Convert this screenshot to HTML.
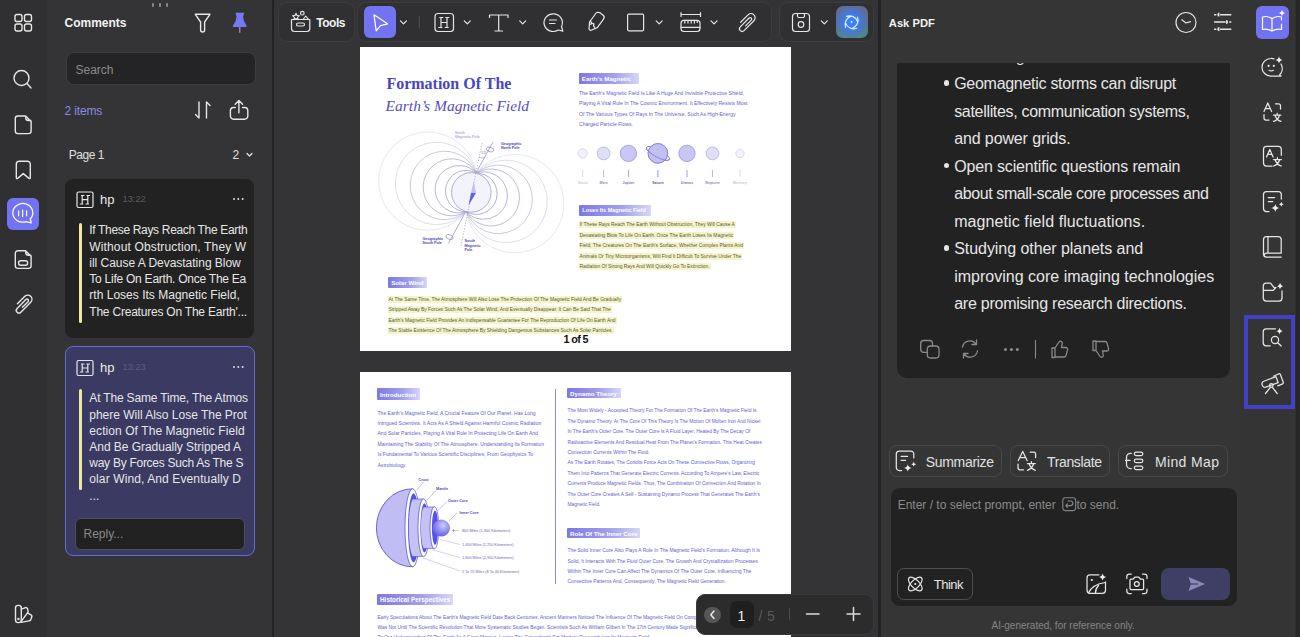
<!DOCTYPE html>
<html><head><meta charset="utf-8">
<style>
*{margin:0;padding:0;box-sizing:border-box}
html,body{width:1300px;height:637px;overflow:hidden;background:#2f2f2f;font-family:"Liberation Sans",sans-serif;position:relative}
.a{position:absolute}
svg.i{position:absolute;overflow:visible;fill:none;stroke:#e6e6e6;stroke-width:1.4;stroke-linecap:round;stroke-linejoin:round}
.t{position:absolute;white-space:nowrap;line-height:1}
</style></head><body>
<!-- backgrounds -->
<div class="a" style="left:0;top:0;width:47px;height:637px;background:#303032"></div>
<div class="a" style="left:47px;top:0;width:225px;height:637px;background:#343436"></div>
<div class="a" style="left:272px;top:0;width:2px;height:637px;background:#222224"></div>
<div class="a" style="left:274px;top:0;width:604px;height:637px;background:#343436"></div>
<div class="a" style="left:878px;top:0;width:3px;height:637px;background:#232325"></div>
<div class="a" style="left:881px;top:0;width:359px;height:637px;background:#353535"></div>
<div class="a" style="left:1240px;top:0;width:55px;height:637px;background:#343434"></div>
<div class="a" style="left:1296px;top:0;width:4px;height:637px;background:#272727"></div>

<!-- LEFT RAIL -->
<svg class="i" style="left:0;top:0" width="46" height="637">
 <rect x="15" y="14.5" width="7" height="7" rx="2"/><rect x="24.5" y="14.5" width="7" height="7" rx="2"/>
 <rect x="15" y="24" width="7" height="7" rx="2"/><rect x="24.5" y="24" width="7" height="7" rx="2"/>
 <circle cx="21.5" cy="78" r="7.5"/><path d="M27 83.5 L31 88"/>
 <path d="M18 116 H25.6 L31.1 121.5 V131 a2.6 2.6 0 0 1 -2.6 2.6 H17.9 a2.6 2.6 0 0 1 -2.6 -2.6 V118.6 a2.6 2.6 0 0 1 2.6 -2.6z M25.8 116.3 V118 a2.5 2.5 0 0 0 2.5 2.5 H30.8"/>
 <path d="M16.3 164.2 a3 3 0 0 1 3 -3 h8 a3 3 0 0 1 3 3 v13.6 a0.8 0.8 0 0 1 -1.3 0.6 l-5.7 -4.8 l-5.7 4.8 a0.8 0.8 0 0 1 -1.3 -0.6 z"/>
 <path d="M18 250.8 H25.6 L31.1 256.3 V265.8 a2.6 2.6 0 0 1 -2.6 2.6 H17.9 a2.6 2.6 0 0 1 -2.6 -2.6 V253.4 a2.6 2.6 0 0 1 2.6 -2.6z M25.8 251.1 V252.8 a2.5 2.5 0 0 0 2.5 2.5 H30.8"/>
 <rect x="18.6" y="260.8" width="9" height="4.5" rx="2"/>
 <path transform="translate(23.3 304) rotate(-45)" d="M-4 -4.3 H6.5 A4.15 4.15 0 0 1 6.5 4 H-7.5 A2.65 2.65 0 0 1 -7.5 -1.3 H5 A1.5 1.5 0 0 1 5 1.7 H-3"/>
 <path d="M15.5 608 a2.6 2.6 0 0 1 2.6 -2.6 h0.6 a2.6 2.6 0 0 1 2.6 2.6 v12 a2.6 2.6 0 0 1 -2.6 2.6 h-0.6 a2.6 2.6 0 0 1 -2.6 -2.6z"/>
 <path d="M21.4 609.2 L24.8 607.8 a2.2 2.2 0 0 1 2.8 1.1 L28.2 611.8 L21.6 620.8"/>
 <path d="M27.6 613.2 L30.6 614.6 a2.2 2.2 0 0 1 1 2.9 L30.8 619.6 a2.2 2.2 0 0 1 -1.8 1.3 L21 622.4"/>
 <circle cx="18.4" cy="619" r="0.5" style="fill:#e6e6e6"/>
</svg>
<div class="a" style="left:7px;top:198px;width:32px;height:32px;border-radius:6px;background:#7273f0"></div>
<svg class="i" style="left:0;top:0;stroke:#fff" width="46" height="240">
 <path d="M30.3 219 L31.2 223 L26.2 221.6 A10 9.3 0 1 1 30.3 219 Z" style="stroke-width:1.25"/>
 <path d="M18.6 210.8 v5 M22.6 210 v6.4 M26.6 210.8 v5" style="stroke-width:1.2"/>
</svg>
<div class="a" style="left:152px;top:3px;width:2px;height:4px;border-radius:1px;background:#8a8a8a"></div>
<div class="a" style="left:159px;top:3px;width:2px;height:4px;border-radius:1px;background:#8a8a8a"></div>
<div class="a" style="left:166px;top:3px;width:2px;height:4px;border-radius:1px;background:#8a8a8a"></div>

<!-- COMMENTS PANEL -->
<div class="t" style="left:64.5px;top:17.4px;font-size:12px;font-weight:bold;color:#f2f2f2">Comments</div>
<svg class="i" style="left:0;top:0" width="270" height="130">
 <path d="M195.3 14.3 H210 L204.6 22 V30 a2 2 0 0 1 -4 0 V22 Z"/>
 <path d="M199 102 v16 l-3.5 -3.5 M206.5 118 v-16 l3.5 3.5"/>
 <path d="M235.2 107.5 H233.6 a3.2 3.2 0 0 0 -3.2 3.2 V116 a3.2 3.2 0 0 0 3.2 3.2 H244.6 a3.2 3.2 0 0 0 3.2 -3.2 V110.7 a3.2 3.2 0 0 0 -3.2 -3.2 H242.6 M238.9 112.8 V100.6 M235.2 104.3 L238.9 100.5 L242.6 104.3"/>
 <path d="M247 153.5 l2.5 2.5 l2.5 -2.5" style="stroke-width:1.2"/>
</svg>
<svg class="a" style="left:0;top:0;position:absolute" width="270" height="40">
 <path fill="#7878f6" d="M235.4 12.8 H244.3 L243 16.5 Q243 21 246.6 25.5 Q247 27 245.6 27 H233.9 Q232.5 27 232.9 25.5 Q236.6 21 236.6 16.5 Z"/><path d="M239.8 27 V32.7" stroke="#a4a4ec" stroke-width="1.1"/>
</svg>
<div class="a" style="left:65.5px;top:51.5px;width:190px;height:33px;border-radius:8px;background:#242426;border:1px solid #3e3e40"></div>
<div class="t" style="left:75.5px;top:63.5px;font-size:12px;color:#8a8a8a">Search</div>
<div class="t" style="left:64.5px;top:104.6px;font-size:12px;color:#8e88e4;letter-spacing:-0.15px">2 items</div>
<div class="t" style="left:68.8px;top:149.3px;font-size:12px;color:#e0e0e0;letter-spacing:-0.5px">Page 1</div>
<div class="t" style="left:232.5px;top:149.3px;font-size:12px;color:#e0e0e0">2</div>

<!-- card 1 -->
<div class="a" style="left:65.3px;top:179px;width:189px;height:159px;border-radius:8px;background:#222"></div>
<svg class="i" style="left:0;top:0;stroke-width:1.2" width="270" height="560">
 <rect x="77" y="192" width="16" height="15.5" rx="1.5"/>
 <path d="M81.5 195.5 h2.5 M80.3 204 h2.5 M87 195.5 h2.5 M86 204 h2.5 M82.2 195.5 v8.5 M87.8 195.5 v8.5 M82.2 199.7 h5.6"/>
</svg>
<div class="t" style="left:100px;top:193px;font-size:13px;color:#eaeaea">hp</div>
<div class="t" style="left:122.5px;top:195.3px;font-size:9.3px;color:#5c5c5c">13:22</div>
<div class="a" style="left:233px;top:198px;width:2.4px;height:2.4px;border-radius:50%;background:#ddd;box-shadow:4.3px 0 0 #ddd,8.6px 0 0 #ddd"></div>
<div class="a" style="left:79.2px;top:222.5px;width:3.3px;height:100px;border-radius:2px;background:#ecea9e"></div>
<div class="a" style="left:89.3px;top:222.3px;font-size:12px;line-height:16.26px;color:#e6e6e6;white-space:nowrap"><span style="letter-spacing:-0.332px">If These Rays Reach The Earth</span><br><span style="letter-spacing:0.142px">Without Obstruction, They W</span><br><span style="letter-spacing:-0.022px">ill Cause A Devastating Blow</span><br><span style="letter-spacing:-0.246px">To Life On Earth. Once The Ea</span><br><span style="letter-spacing:0.014px">rth Loses Its Magnetic Field,</span><br><span style="letter-spacing:-0.217px">The Creatures On The Earth'...</span></div>

<!-- card 2 -->
<div class="a" style="left:65.2px;top:346px;width:190px;height:210px;border-radius:8px;background:#3a3a62;border:1.5px solid #6b6bd6"></div>
<svg class="i" style="left:0;top:0;stroke-width:1.2" width="270" height="560">
 <rect x="77" y="360.5" width="16" height="15" rx="1.5"/>
 <path d="M81.5 364 h2.5 M80.3 372 h2.5 M87 364 h2.5 M86 372 h2.5 M82.2 364 v8 M87.8 364 v8 M82.2 368 h5.6"/>
</svg>
<div class="t" style="left:100px;top:361px;font-size:13px;color:#eaeaea">hp</div>
<div class="t" style="left:122.5px;top:363px;font-size:9.3px;color:#5d5d80">13:23</div>
<div class="a" style="left:233px;top:366px;width:2.4px;height:2.4px;border-radius:50%;background:#ddd;box-shadow:4.3px 0 0 #ddd,8.6px 0 0 #ddd"></div>
<div class="a" style="left:79.2px;top:389px;width:3.3px;height:101px;border-radius:2px;background:#ecea9e"></div>
<div class="a" style="left:89.3px;top:390.4px;font-size:12px;line-height:16.2px;color:#e6e6e6;white-space:nowrap"><span style="letter-spacing:-0.165px">At The Same Time, The Atmos</span><br><span style="letter-spacing:-0.011px">phere Will Also Lose The Prot</span><br><span style="letter-spacing:0.078px">ection Of The Magnetic Field</span><br><span style="letter-spacing:-0.038px">And Be Gradually Stripped A</span><br><span style="letter-spacing:-0.269px">way By Forces Such As The S</span><br><span style="letter-spacing:0.112px">olar Wind, And Eventually D</span><br>...</div>
<div class="a" style="left:74.5px;top:518px;width:170.5px;height:32px;border-radius:6px;background:#212121;border:1px solid #4d4d5c"></div>
<div class="t" style="left:83.5px;top:528px;font-size:12px;color:#888">Reply...</div>

<!-- TOOLBAR -->
<div class="a" style="left:278px;top:2px;width:77px;height:40px;border-radius:9px;border:1px solid #3d3d3f;background:#303032"></div>
<div class="a" style="left:357px;top:2px;width:415px;height:39.5px;border-radius:9px;border:1px solid #3d3d3f;background:#303032"></div>
<div class="a" style="left:778.5px;top:2px;width:95.5px;height:40px;border-radius:9px;border:1px solid #3d3d3f;background:#303032"></div>
<div class="t" style="left:316.3px;top:16.9px;font-size:12px;font-weight:bold;color:#f2f2f2;letter-spacing:-0.5px">Tools</div>
<div class="a" style="left:364px;top:6px;width:32px;height:32px;border-radius:6px;background:#7273f0"></div>
<div class="a" style="left:836px;top:6px;width:32px;height:32px;border-radius:7px;background:radial-gradient(circle at 48% 48%,#3a86f8 0,#3b7cf0 30%,rgba(70,120,220,0.6) 50%,rgba(80,110,160,0) 75%),linear-gradient(180deg,#66698e 0%,#5a7090 50%,#4f8a8c 100%)"></div>
<svg class="i" style="left:0;top:0;stroke-width:1.2" width="880" height="45">
 <!-- tools box -->
 <path d="M291.5 19.5 h18.3 v9 a3 3 0 0 1 -3 3 h-12.3 a3 3 0 0 1 -3 -3z"/>
 <rect x="296.5" y="23" width="8" height="3" rx="1.5"/>
 <path d="M296.00 13.20 L297.00 15.42 L299.42 15.69 L297.62 17.33 L298.12 19.71 L296.00 18.50 L293.88 19.71 L294.38 17.33 L292.58 15.69 L295.00 15.42Z" style="stroke-width:1.1"/>
 <path d="M303.2 19.3 L305.8 16 L308.4 19.3" style="stroke-width:1.1"/>
 <circle cx="302.3" cy="13.2" r="1.8"/>
 <!-- cursor -->
 <path d="M374 14.8 L387.5 23.8 L380.5 25.6 L376.2 30.8 Z" style="stroke:#fff"/>
 <!-- chevrons -->
 <path d="M400.5 20.8 l3 3 l3 -3 M464.3 20.8 l3 3 l3 -3 M519.7 20.8 l3 3 l3 -3 M656.2 20.8 l3 3 l3 -3 M711 20.8 l3 3 l3 -3 M821.3 20.8 l3 3 l3 -3"/>
 <path d="M419.3 16 v12" style="stroke:#4a4a4a"/>
 <!-- H -->
 <rect x="435" y="13.5" width="18.5" height="18" rx="3"/>
 <path d="M439.8 17.5 h3 M438.8 27.5 h3 M445.8 17.5 h3 M445.2 27.5 h3 M441 17.5 v10 M447 17.5 v10 M441 22.5 h6"/>
 <!-- T -->
 <path d="M489.5 17.5 v-2.5 h18.5 v2.5 M498.7 15 v16 M495 31 h7.5"/>
 <!-- comment -->
 <path d="M561.5 26.5 a9.2 8.8 0 1 0 -3.2 3.5 l4.6 1.2 z"/>
 <path d="M549.5 20 h7 M549.5 23.5 h5.5"/>
 <!-- pen -->
 <g transform="translate(595.5 22) rotate(36)"><path d="M-4.8 3.5 V-7 a3 3 0 0 1 3 -3 H1.8 a3 3 0 0 1 3 3 V3.5 L1.3 9.2 a1.5 1.5 0 0 1 -2.6 0 Z"/><path d="M-4.8 2.2 q2.4 0.2 2.4 2.6 q0 -2.4 2.4 -2.4 q0 2.4 2.4 2.4" transform="translate(0 0)"/></g>
 <!-- square -->
 <rect x="627.6" y="14.2" width="16" height="16.6" rx="1.2"/>
 <!-- ruler -->
 <path d="M681 12.5 v4 M700.5 12.5 v4 M681 14.5 h19.5"/>
 <rect x="681" y="20.3" width="19" height="11.2" rx="3"/>
 <path d="M684.8 20.3 v2.8 M688 20.3 v2.8 M691.2 20.3 v2.8 M694.4 20.3 v2.8 M697.2 20.3 v2.2 M681 27.3 h19"/>
 <!-- clip -->
 <path transform="translate(746.5 22.5) rotate(-45)" d="M-4 -4.3 H6.5 A4.15 4.15 0 0 1 6.5 4 H-7.5 A2.65 2.65 0 0 1 -7.5 -1.3 H5 A1.5 1.5 0 0 1 5 1.7 H-3"/>
 <!-- save -->
 <path d="M795.5 13.5 h11 a3 3 0 0 1 3 3 v12 a3 3 0 0 1 -3 3 h-11 a3 3 0 0 1 -3 -3 v-12 a3 3 0 0 1 3 -3z"/>
 <path d="M797.5 13.5 v2.5 a1.5 1.5 0 0 0 1.5 1.5 h4 a1.5 1.5 0 0 0 1.5 -1.5 v-2.5"/>
 <circle cx="801" cy="24.5" r="2.8"/>
 <!-- ai -->
 <g style="stroke:#e0f0ff;stroke-width:1.2"><path d="M845.64 27.36 A8.6 8.6 0 0 1 850.78 16.34 M846.54 16.34 A8.6 8.6 0 0 1 857.56 21.48 M857.56 17.24 A8.6 8.6 0 0 1 852.42 28.26 M856.66 28.26 A8.6 8.6 0 0 1 845.64 23.12"/></g>
 <circle cx="851.6" cy="22" r="1" style="fill:#e0f0ff;stroke:none"/>
</svg>

<!-- PAGES -->
<div class="a" style="left:360px;top:47px;width:431px;height:304px;background:#fff"></div>
<div class="t" style="left:386.4px;top:76.1px;font-size:16px;font-weight:bold;font-family:'Liberation Serif',serif;color:#4845c8">Formation Of The</div>
<div class="t" style="left:385.6px;top:98px;font-size:15.5px;font-style:italic;font-family:'Liberation Serif',serif;color:#5350c4">Earth’s Magnetic Field</div>
<div class="a" style="left:578.8px;top:72.5px;width:60px;height:11px;background:linear-gradient(90deg,#7c78e4 0%,#a4a1ec 60%,#d8d6f8 100%);border-radius:1px"></div>
<div class="t" style="left:581.8px;top:75.7px;font-size:6.2px;font-weight:bold;color:#fff">Earth’s Magnetic</div>
<div class="t" style="left:579px;top:90.6px;font-size:5.08px;color:#6460d4">The Earth’s Magnetic Field Is Like A Huge And Invisible Protective Shield,</div>
<div class="t" style="left:579px;top:101.0px;font-size:5.08px;color:#6460d4">Playing A Vital Role In The Cosmic Environment. It Effectively Resists Most</div>
<div class="t" style="left:579px;top:111.5px;font-size:5.08px;color:#6460d4">Of The Various Types Of Rays In The Universe, Such As High-Energy</div>
<div class="t" style="left:579px;top:121.9px;font-size:5.08px;color:#6460d4">Charged Particle Flows.</div>
<svg class="a" style="left:0;top:0;position:absolute;overflow:visible" width="800" height="360">
<circle cx="582.7" cy="153.4" r="4.6" fill="#f1f1fb" stroke="#c9c9e6" stroke-width="0.7"/>
<path d="M582.7 170 v7" stroke="#c9c9e6" stroke-width="0.8"/>
<circle cx="603.6" cy="153.4" r="6.4" fill="#dfdff7" stroke="#a9a7e0" stroke-width="0.7"/>
<path d="M603.6 170 v7" stroke="#a9a7e0" stroke-width="0.8"/>
<circle cx="628.4" cy="153.4" r="8.2" fill="#c8c6f4" stroke="#8f8cdc" stroke-width="0.7"/>
<path d="M628.4 170 v7" stroke="#8f8cdc" stroke-width="0.8"/>
<circle cx="657.9" cy="153.4" r="9.8" fill="#c2c0f3" stroke="#7a76d4" stroke-width="0.7"/>
<path d="M657.9 170 v7" stroke="#7a76d4" stroke-width="0.8"/>
<circle cx="687" cy="153.4" r="8.2" fill="#c8c6f4" stroke="#8f8cdc" stroke-width="0.7"/>
<path d="M687 170 v7" stroke="#8f8cdc" stroke-width="0.8"/>
<circle cx="712.5" cy="153.4" r="6.4" fill="#dfdff7" stroke="#a9a7e0" stroke-width="0.7"/>
<path d="M712.5 170 v7" stroke="#a9a7e0" stroke-width="0.8"/>
<circle cx="740" cy="153.4" r="4.2" fill="#f3f3fb" stroke="#cfcfe8" stroke-width="0.7"/>
<path d="M740 170 v7" stroke="#cfcfe8" stroke-width="0.8"/>
<ellipse cx="657.9" cy="153.4" rx="13" ry="4" transform="rotate(28 657.9 153.4)" fill="none" stroke="#7a76d4" stroke-width="0.8"/>
<circle cx="657.9" cy="153.4" r="9.8" fill="#c2c0f3" stroke="#7a76d4" stroke-width="0.7"/>
<path d="M646.5 147.5 a13 4 28 0 0 23 12" fill="none" stroke="#7a76d4" stroke-width="0.8"/>
<text x="582.7" y="183.5" font-size="3.6" text-anchor="middle" fill="#c8c8dd" font-family="Liberation Sans" font-weight="bold">Venus</text>
<text x="603.6" y="183.5" font-size="3.6" text-anchor="middle" fill="#8f8cd0" font-family="Liberation Sans" font-weight="bold">Mars</text>
<text x="628.4" y="183.5" font-size="3.6" text-anchor="middle" fill="#7a76cc" font-family="Liberation Sans" font-weight="bold">Jupiter</text>
<text x="657.9" y="183.5" font-size="3.6" text-anchor="middle" fill="#5a56c0" font-family="Liberation Sans" font-weight="bold">Saturn</text>
<text x="687" y="183.5" font-size="3.6" text-anchor="middle" fill="#7a76cc" font-family="Liberation Sans" font-weight="bold">Uranus</text>
<text x="712.5" y="183.5" font-size="3.6" text-anchor="middle" fill="#8f8cd0" font-family="Liberation Sans" font-weight="bold">Neptune</text>
<text x="740" y="183.5" font-size="3.6" text-anchor="middle" fill="#c8c8dd" font-family="Liberation Sans" font-weight="bold">Mercury</text>
<g transform="rotate(14.5 471.3 192.4)" fill="none" stroke-width="0.7">
<path d="M471.3 172.4 A49.13 49.13 0 1 0 471.3 212.4" stroke="#e0e0ee"/>
<path d="M471.3 172.4 A41.10 41.10 0 1 0 471.3 212.4" stroke="#d4d3e6"/>
<path d="M471.3 172.4 A34.23 34.23 0 1 0 471.3 212.4" stroke="#b9b8d8"/>
<path d="M471.3 172.4 A28.50 28.50 0 1 0 471.3 212.4" stroke="#a9a8d0"/>
<path d="M471.3 172.4 A23.73 23.73 0 1 0 471.3 212.4" stroke="#a09fcc"/>
<path d="M471.3 172.4 A20.69 20.69 0 1 0 471.3 212.4" stroke="#9a99c8"/>
<path d="M471.3 172.4 A49.13 49.13 0 1 1 471.3 212.4" stroke="#e0e0ee"/>
<path d="M471.3 172.4 A41.10 41.10 0 1 1 471.3 212.4" stroke="#d4d3e6"/>
<path d="M471.3 172.4 A34.23 34.23 0 1 1 471.3 212.4" stroke="#b9b8d8"/>
<path d="M471.3 172.4 A28.50 28.50 0 1 1 471.3 212.4" stroke="#a9a8d0"/>
<path d="M471.3 172.4 A23.73 23.73 0 1 1 471.3 212.4" stroke="#a09fcc"/>
<path d="M471.3 172.4 A20.69 20.69 0 1 1 471.3 212.4" stroke="#9a99c8"/>
</g>
<circle cx="471.3" cy="192.4" r="19.8" fill="#f3f3fb" stroke="#9a98d0" stroke-width="0.8"/>
<path d="M493 142 L476.5 172 M465 213 L448.4 243.6" stroke="#7b78b8" stroke-width="0.6"/>
<path d="M482 143 L461 246" stroke="#8a88c0" stroke-width="0.6" stroke-dasharray="1.4 1.4"/>
<path d="M473.8 181 L476 193 L471 193z" fill="#c2c0f4"/>
<path d="M471 193 L476 193 L468.5 205.5z" fill="#6662de"/>
<ellipse cx="490" cy="149.5" rx="3.8" ry="2.2" transform="rotate(20 490 149.5)" fill="none" stroke="#7b78b8" stroke-width="0.6"/>
<ellipse cx="449.5" cy="237" rx="3.8" ry="2.2" transform="rotate(20 449.5 237)" fill="none" stroke="#7b78b8" stroke-width="0.6"/>
<path d="M479 157 q3 2 6 0.5" fill="none" stroke="#7b78b8" stroke-width="0.5"/>
<text x="481" y="153.5" font-size="3.4" fill="#666" font-family="Liberation Sans">1.5</text>
<text x="455" y="133.5" font-size="3.7" font-weight="bold" fill="#b0aee6" font-family="Liberation Sans">North</text>
<text x="455" y="138" font-size="3.7" font-weight="bold" fill="#b0aee6" font-family="Liberation Sans">Magnetic Pole</text>
<text x="501" y="144.5" font-size="3.7" font-weight="bold" fill="#4a46b8" font-family="Liberation Sans">Geographic</text>
<text x="501" y="149" font-size="3.7" font-weight="bold" fill="#4a46b8" font-family="Liberation Sans">North Pole</text>
<text x="422.5" y="239.5" font-size="3.7" font-weight="bold" fill="#4a46b8" font-family="Liberation Sans">Geographic</text>
<text x="422.5" y="244" font-size="3.7" font-weight="bold" fill="#4a46b8" font-family="Liberation Sans">South Pole</text>
<text x="464.5" y="242" font-size="3.7" font-weight="bold" fill="#4a46b8" font-family="Liberation Sans">South</text>
<text x="464.5" y="246.5" font-size="3.7" font-weight="bold" fill="#4a46b8" font-family="Liberation Sans">Magnetic</text>
<text x="464.5" y="251" font-size="3.7" font-weight="bold" fill="#4a46b8" font-family="Liberation Sans">Pole</text>
</svg>
<div class="a" style="left:579.3px;top:204.6px;width:71.7px;height:11px;background:linear-gradient(90deg,#7c78e4 0%,#a4a1ec 60%,#d8d6f8 100%);border-radius:1px"></div>
<div class="t" style="left:582.3px;top:208.2px;font-size:5.5px;font-weight:bold;color:#fff">Loses Its Magnetic Field</div>
<div class="t" style="left:578.5px;top:221.2px;height:7.2px;font-size:4.9px;line-height:7.2px;color:#55554a;background:#f6f5c6;padding:0 1px">If These Rays Reach The Earth Without Obstruction, They Will Cause A</div>
<div class="t" style="left:578.5px;top:231.7px;height:7.2px;font-size:4.9px;line-height:7.2px;color:#55554a;background:#f6f5c6;padding:0 1px">Devastating Blow To Life On Earth. Once The Earth Loses Its Magnetic</div>
<div class="t" style="left:578.5px;top:242.1px;height:7.2px;font-size:4.9px;line-height:7.2px;color:#55554a;background:#f6f5c6;padding:0 1px">Field, The Creatures On The Earth’s Surface, Whether Complex Plants And</div>
<div class="t" style="left:578.5px;top:252.6px;height:7.2px;font-size:4.9px;line-height:7.2px;color:#55554a;background:#f6f5c6;padding:0 1px">Animals Or Tiny Microorganisms, Will Find It Difficult To Survive Under The</div>
<div class="t" style="left:578.5px;top:263.0px;height:7.2px;font-size:4.9px;line-height:7.2px;color:#55554a;background:#f6f5c6;padding:0 1px">Radiation Of Strong Rays And Will Quickly Go To Extinction.</div>
<div class="a" style="left:388.2px;top:276.6px;width:38.5px;height:11px;background:linear-gradient(90deg,#7c78e4 0%,#a4a1ec 60%,#d8d6f8 100%);border-radius:1px"></div>
<div class="t" style="left:391.2px;top:279.8px;font-size:6.2px;font-weight:bold;color:#fff">Solar Wind</div>
<div class="t" style="left:387.5px;top:295.8px;height:7.2px;font-size:4.9px;line-height:7.2px;color:#55554a;background:#f6f5c6;padding:0 1px">At The Same Time, The Atmosphere Will Also Lose The Protection Of The Magnetic Field And Be Gradually</div>
<div class="t" style="left:387.5px;top:306.2px;height:7.2px;font-size:4.9px;line-height:7.2px;color:#55554a;background:#f6f5c6;padding:0 1px">Stripped Away By Forces Such As The Solar Wind, And Eventually Disappear. It Can Be Said That The</div>
<div class="t" style="left:387.5px;top:316.7px;height:7.2px;font-size:4.9px;line-height:7.2px;color:#55554a;background:#f6f5c6;padding:0 1px">Earth’s Magnetic Field Provides An Indispensable Guarantee For The Reproduction Of Life On Earth And</div>
<div class="t" style="left:387.5px;top:327.2px;height:7.2px;font-size:4.9px;line-height:7.2px;color:#55554a;background:#f6f5c6;padding:0 1px">The Stable Existence Of The Atmosphere By Shielding Dangerous Substances Such As Solar Particles.</div>
<div class="t" style="left:563.4px;top:333.8px;font-size:10.8px;letter-spacing:-0.6px;font-weight:bold;color:#111">1 of 5</div>
<div class="a" style="left:360px;top:372px;width:431px;height:265px;background:#fff"></div>
<div class="a" style="left:377px;top:388.4px;width:42.6px;height:11.4px;background:linear-gradient(90deg,#7c78e4 0%,#a4a1ec 60%,#d8d6f8 100%);border-radius:1px"></div>
<div class="t" style="left:380px;top:391.8px;font-size:6.2px;font-weight:bold;color:#fff">Introduction</div>
<div class="t" style="left:377.5px;top:410.5px;font-size:5.05px;color:#6460d4">The Earth’s Magnetic Field, A Crucial Feature Of Our Planet, Has Long</div>
<div class="t" style="left:377.5px;top:420.9px;font-size:5.05px;color:#6460d4">Intrigued Scientists. It Acts As A Shield Against Harmful Cosmic Radiation</div>
<div class="t" style="left:377.5px;top:431.3px;font-size:5.05px;color:#6460d4">And Solar Particles, Playing A Vital Role In Protecting Life On Earth And</div>
<div class="t" style="left:377.5px;top:441.7px;font-size:5.05px;color:#6460d4">Maintaining The Stability Of The Atmosphere. Understanding Its Formation</div>
<div class="t" style="left:377.5px;top:452.2px;font-size:5.05px;color:#6460d4">Is Fundamental To Various Scientific Disciplines, From Geophysics To</div>
<div class="t" style="left:377.5px;top:462.6px;font-size:5.05px;color:#6460d4">Astrobiology.</div>
<div class="a" style="left:555px;top:388.6px;width:1px;height:195.5px;background:#8f8cd6"></div>
<div class="a" style="left:567px;top:387.8px;width:53.6px;height:10.5px;background:linear-gradient(90deg,#7c78e4 0%,#a4a1ec 60%,#d8d6f8 100%);border-radius:1px"></div>
<div class="t" style="left:570px;top:390.8px;font-size:6.2px;font-weight:bold;color:#fff">Dynamo Theory</div>
<div class="t" style="left:567.5px;top:409.4px;font-size:4.87px;color:#6460d4">The Most Widely - Accepted Theory For The Formation Of The Earth’s Magnetic Field Is</div>
<div class="t" style="left:567.5px;top:419.8px;font-size:4.87px;color:#6460d4">The Dynamo Theory. At The Core Of This Theory Is The Motion Of Molten Iron And Nickel</div>
<div class="t" style="left:567.5px;top:430.2px;font-size:4.87px;color:#6460d4">In The Earth’s Outer Core. The Outer Core Is A Fluid Layer, Heated By The Decay Of</div>
<div class="t" style="left:567.5px;top:440.6px;font-size:4.87px;color:#6460d4">Radioactive Elements And Residual Heat From The Planet’s Formation. This Heat Creates</div>
<div class="t" style="left:567.5px;top:451.0px;font-size:4.87px;color:#6460d4">Convection Currents Within The Fluid.</div>
<div class="t" style="left:567.5px;top:461.4px;font-size:4.87px;color:#6460d4">As The Earth Rotates, The Coriolis Force Acts On These Convective Flows, Organizing</div>
<div class="t" style="left:567.5px;top:471.8px;font-size:4.87px;color:#6460d4">Them Into Patterns That Generate Electric Currents. According To Ampere’s Law, Electric</div>
<div class="t" style="left:567.5px;top:482.2px;font-size:4.87px;color:#6460d4">Currents Produce Magnetic Fields. Thus, The Combination Of Convection And Rotation In</div>
<div class="t" style="left:567.5px;top:492.6px;font-size:4.87px;color:#6460d4">The Outer Core Creates A Self - Sustaining Dynamo Process That Generates The Earth’s</div>
<div class="t" style="left:567.5px;top:503.0px;font-size:4.87px;color:#6460d4">Magnetic Field.</div>
<div class="a" style="left:567px;top:528px;width:73px;height:10.3px;background:linear-gradient(90deg,#7c78e4 0%,#a4a1ec 60%,#d8d6f8 100%);border-radius:1px"></div>
<div class="t" style="left:570px;top:530.8px;font-size:6.2px;font-weight:bold;color:#fff">Role Of The Inner Core</div>
<div class="t" style="left:567.5px;top:549.1px;font-size:4.95px;color:#6460d4">The Solid Inner Core Also Plays A Role In The Magnetic Field’s Formation. Although It Is</div>
<div class="t" style="left:567.5px;top:559.5px;font-size:4.95px;color:#6460d4">Solid, It Interacts With The Fluid Outer Core. The Growth And Crystallization Processes</div>
<div class="t" style="left:567.5px;top:569.9px;font-size:4.95px;color:#6460d4">Within The Inner Core Can Affect The Dynamics Of The Outer Core, Influencing The</div>
<div class="t" style="left:567.5px;top:580.3px;font-size:4.95px;color:#6460d4">Convective Patterns And, Consequently, The Magnetic Field Generation.</div>
<div class="a" style="left:377px;top:594px;width:76px;height:11px;background:linear-gradient(90deg,#7c78e4 0%,#a4a1ec 60%,#d8d6f8 100%);border-radius:1px"></div>
<div class="t" style="left:380px;top:597.1px;font-size:6.4px;font-weight:bold;color:#fff">Historical Perspectives</div>
<div class="t" style="left:377.5px;top:615.5px;font-size:4.9px;color:#6460d4">Early Speculations About The Earth’s Magnetic Field Date Back Centuries. Ancient Mariners Noticed The Influence Of The Magnetic Field On Compasses, But It</div>
<div class="t" style="left:377.5px;top:626.0px;font-size:4.9px;color:#6460d4">Was Not Until The Scientific Revolution That More Systematic Studies Began. Scientists Such As William Gilbert In The 17th Century Made Significant Contributions</div>
<div class="t" style="left:377.5px;top:636.4px;font-size:4.9px;color:#6460d4">To Our Understanding Of The Earth As A Giant Magnet, Laying The Groundwork For Modern Research Into Its Magnetic Field.</div>
<svg class="a" style="left:0;top:0;position:absolute;overflow:visible" width="800" height="637">
<defs><radialGradient id="ic" cx="60%" cy="35%" r="75%"><stop offset="0" stop-color="#d0ceff"/><stop offset="0.5" stop-color="#8f8cf0"/><stop offset="1" stop-color="#5a55e0"/></radialGradient></defs>
<path d="M412.4 488.8 A36 39 0 0 0 412.4 566.8 Z" fill="#bfbdf3" stroke="#4b47c4" stroke-width="0.8"/>
<ellipse cx="412.6" cy="527.8" rx="7.6" ry="39" fill="#fff" stroke="#4b47c4" stroke-width="0.7"/>
<ellipse cx="413.6" cy="527.8" rx="5.6" ry="34.5" fill="#5552e4"/>
<path d="M413.6 499 H423.6 V556.6 H413.6 A4.8 28.8 0 0 1 413.6 499z" fill="#c4c2f6"/>
<path d="M413.5 499 H423.5 M413.5 556.6 H423.5" stroke="#4b47c4" stroke-width="0.6"/>
<ellipse cx="423.6" cy="527.8" rx="5.6" ry="29" fill="#fff" stroke="#4b47c4" stroke-width="0.7"/>
<ellipse cx="424.4" cy="527.8" rx="4" ry="24.5" fill="#5552e4"/>
<path d="M424.4 507 H434.4 V548.6 H424.4 A3.5 20.8 0 0 1 424.4 507z" fill="#c4c2f6"/>
<path d="M424.4 507 H434.4 M424.4 548.6 H434.4" stroke="#4b47c4" stroke-width="0.6"/>
<ellipse cx="434.4" cy="527.8" rx="4.4" ry="21" fill="#fff" stroke="#4b47c4" stroke-width="0.7"/>
<ellipse cx="435" cy="527.8" rx="3.1" ry="17" fill="#5552e4"/>
<circle cx="441.4" cy="528" r="8.6" fill="url(#ic)"/>
<path d="M417 490 L424 481.5 M427 500 L436 490.5 M438 510.5 L447 501.5 M449 521 L457 513" stroke="#8a88c8" stroke-width="0.5"/>
<path d="M455 530.5 h4 M440 539.5 L460 544.5 M433 550 L460 557.5 M423 558 L460 571" stroke="#a8a6d4" stroke-width="0.5"/>
<path d="M452 530.5 h3 M453.5 529 v3" stroke="#777" stroke-width="0.5"/>
<text x="418.5" y="481" font-size="3.8" font-weight="bold" fill="#4a46b8" font-family="Liberation Sans">Crust</text>
<text x="436" y="489.5" font-size="3.8" font-weight="bold" fill="#4a46b8" font-family="Liberation Sans">Mantle</text>
<text x="448" y="501.5" font-size="3.8" font-weight="bold" fill="#4a46b8" font-family="Liberation Sans">Outer Core</text>
<text x="459.5" y="513.5" font-size="3.8" font-weight="bold" fill="#4a46b8" font-family="Liberation Sans">Inner Core</text>
<text x="462" y="531.8" font-size="3.8" fill="#6a66c8" font-family="Liberation Sans">800 Miles (1,300 Kilometers)</text>
<text x="462" y="545.5" font-size="3.8" fill="#6a66c8" font-family="Liberation Sans">1,400 Miles (2,250 Kilometers)</text>
<text x="462" y="559" font-size="3.8" fill="#6a66c8" font-family="Liberation Sans">1,800 Miles (2,900 Kilometers)</text>
<text x="462" y="572.5" font-size="3.8" fill="#6a66c8" font-family="Liberation Sans">5 To 25 Miles (8 To 40 Kilometers)</text>
</svg>
<!-- /PAGES -->

<!-- NAV -->
<div class="a" style="left:696px;top:594px;width:178px;height:41px;border-radius:9px;background:#2c2c2c;border:1px solid #3a3a3a"></div>
<div class="a" style="left:704px;top:606.5px;width:16.5px;height:16.5px;border-radius:50%;background:#565656"></div>
<svg class="i" style="left:0;top:0;stroke-width:1.5" width="880" height="637">
 <path d="M714 611 l-3.2 3.7 l3.2 3.7" style="stroke:#e8e8e8"/>
 <path d="M789.5 608 v12" style="stroke:#4a4a4a;stroke-width:1"/>
 <path d="M806.5 614 h12.5" style="stroke:#ddd;stroke-width:1.5"/>
 <path d="M847 614 h13 M853.5 607.5 v13" style="stroke:#ddd;stroke-width:1.5"/>
</svg>
<div class="a" style="left:730px;top:600.5px;width:23.5px;height:27px;border-radius:7px;background:#1f1f1f"></div>
<div class="t" style="left:737.6px;top:608.5px;font-size:14px;color:#f0f0f0">1</div>
<div class="t" style="left:758.5px;top:608.5px;font-size:14px;letter-spacing:0.3px;color:#5a5a5a">/ 5</div>

<!-- RIGHT PANEL -->
<div class="t" style="left:888.8px;top:17.8px;font-size:11.2px;font-weight:bold;color:#f2f2f2">Ask PDF</div>
<div class="a" style="left:1256px;top:6px;width:32.5px;height:32.5px;border-radius:6px;background:#7273f0"></div>
<svg class="i" style="left:0;top:0;stroke-width:1.2" width="1300" height="637">
 <circle cx="1186" cy="22.5" r="10"/><path d="M1181.8 19.8 L1186 23 L1190.5 21.6"/>
 <path d="M1214.6 14.7 h1.2 M1220.6 14.7 h10.2 M1214.6 22 h10.4 M1229.8 22 h1 M1214.6 29.2 h1.2 M1220.6 29.2 h10.2" style="stroke-width:1.5"/>
 <g style="stroke:#fff">
 <path d="M1262.5 29.5 v-12.5 q4.5 -1.5 9.5 1.5 q5 -3 9.5 -1.5 v3 M1281.5 24 v5.5 q-5 -1 -9.5 1.5 q-4.5 -2.5 -9.5 -1.5 M1272 18.5 v12.5"/>
 </g>
</svg>
<svg class="a" style="left:0;top:0;position:absolute" width="1300" height="40">
 <path fill="#e6e6e6" d="M1219.4 12.6 a2.1 2.1 0 1 0 0 4.2z M1226 19.9 a2.1 2.1 0 1 1 0 4.2z M1219.4 27.1 a2.1 2.1 0 1 0 0 4.2z"/>
 <path fill="#fff" d="M1282 10 q0.6 2.8 3 3 q-2.4 0.6 -3 3 q-0.6 -2.4 -3 -3 q2.4 -0.2 3 -3z"/>
</svg>

<!-- answer card -->
<div class="a" style="left:897px;top:63px;width:333px;height:315px;border-radius:0 0 10px 10px;background:#222;overflow:hidden">
 <div class="t" style="left:119px;top:-14px;font-size:15.2px;color:#e6e6e6">g</div>
</div>
<div class="a" style="left:943.8px;top:80.2px;width:5.6px;height:5.6px;border-radius:50%;background:#e6e6e6"></div>
<div class="a" style="left:943.8px;top:162.7px;width:5.6px;height:5.6px;border-radius:50%;background:#e6e6e6"></div>
<div class="a" style="left:943.8px;top:245.2px;width:5.6px;height:5.6px;border-radius:50%;background:#e6e6e6"></div>
<div class="a" style="left:954.2px;top:70.3px;font-size:16px;line-height:27.5px;color:#e6e6e6;white-space:nowrap"><span style="letter-spacing:-0.283px">Geomagnetic storms can disrupt</span><br><span style="letter-spacing:-0.318px">satellites, communication systems,</span><br><span style="letter-spacing:-0.12px">and power grids.</span><br><span style="letter-spacing:-0.158px">Open scientific questions remain</span><br><span style="letter-spacing:-0.394px">about small-scale core processes and</span><br><span style="letter-spacing:0.089px">magnetic field fluctuations.</span><br><span style="letter-spacing:-0.056px">Studying other planets and</span><br><span style="letter-spacing:0.009px">improving core imaging technologies</span><br><span style="letter-spacing:-0.248px">are promising research directions.</span></div>
<svg class="i" style="left:0;top:0;stroke:#8a8a8a;stroke-width:1.3" width="1300" height="637">
 <rect x="927.3" y="346" width="11.7" height="12" rx="3.2"/><path d="M927.3 352.3 h-3.6 a3 3 0 0 1 -3 -3 v-5.8 a3 3 0 0 1 3 -3 h5.8 a3 3 0 0 1 3 3 v2.5" />
 <path d="M962.5 347 a7.5 7.5 0 0 1 13.5 -3 M976.5 340 v4.5 h-4.5 M977.5 351 a7.5 7.5 0 0 1 -13.5 3 M963.5 358 v-4.5 h4.5"/>
 <path d="M1035.5 340.5 v17.5" style="stroke-width:1.1"/>
 <path d="M1052 348 h3 v9.5 h-3z M1055 348 l4 -6 a1.8 1.8 0 0 1 3.3 1 l-0.8 4.5 h4.3 a1.8 1.8 0 0 1 1.8 2.2 l-1.6 6 a1.8 1.8 0 0 1 -1.8 1.3 h-9.2"/>
 <path d="M1093 350.5 h3 v-9.5 h-3z M1096 350.5 l4 6 a1.8 1.8 0 0 0 3.3 -1 l-0.8 -4.5 h4.3 a1.8 1.8 0 0 0 1.8 -2.2 l-1.6 -6 a1.8 1.8 0 0 0 -1.8 -1.3 h-9.2"/>
</svg>
<div class="a" style="left:1004.2px;top:347.5px;width:3px;height:3px;border-radius:50%;background:#8c8c8c;box-shadow:5.9px 0 0 #8c8c8c,11.8px 0 0 #8c8c8c"></div>

<!-- chips -->
<div class="a" style="left:889px;top:445px;width:113px;height:31.5px;border-radius:8px;border:1px solid #484848"></div>
<div class="a" style="left:1010.4px;top:445px;width:99.3px;height:31.5px;border-radius:8px;border:1px solid #484848"></div>
<div class="a" style="left:1118.4px;top:445px;width:109.6px;height:31.5px;border-radius:8px;border:1px solid #484848"></div>
<div class="t" style="left:925.7px;top:454.7px;font-size:14px;letter-spacing:-0.3px;color:#e0e0e0">Summarize</div>
<div class="t" style="left:1047px;top:454.7px;font-size:14px;color:#e0e0e0;letter-spacing:-0.35px">Translate</div>
<div class="t" style="left:1155px;top:454.7px;font-size:14px;color:#e0e0e0;letter-spacing:0.35px">Mind Map</div>

<!-- input -->
<div class="a" style="left:889.5px;top:487px;width:348.5px;height:120px;border-radius:10px;background:#222;border:1px solid #363636"></div>
<div class="t" style="left:897.7px;top:499.1px;font-size:12px;color:#8a8a8a">Enter / to select prompt, enter</div>
<div class="t" style="left:1076.5px;top:499.1px;font-size:12px;color:#8a8a8a">to send.</div>
<div class="a" style="left:897.4px;top:568px;width:75.2px;height:31.5px;border-radius:7px;border:1px solid #4e4e4e"></div>
<div class="t" style="left:933.8px;top:578.4px;font-size:13px;letter-spacing:-0.5px;color:#e6e6e6">Think</div>
<div class="a" style="left:1161.3px;top:568px;width:69.1px;height:31.8px;border-radius:8px;background:#3f3f65"></div>
<svg class="a" style="left:0;top:0;position:absolute" width="1300" height="637">
 <path fill="#8a8ab8" d="M1188.5 577 l16.5 7 l-16.5 7 l2.5 -7z"/>
 <path fill="#6a6a96" d="M1191 584 h7" stroke="#3f3f65" stroke-width="1.2"/>
</svg>
<div class="t" style="left:991.5px;top:620.5px;font-size:10px;color:#858585">AI-generated, for reference only.</div>

<!-- right rail highlight -->
<div class="a" style="left:1244px;top:315px;width:50.6px;height:94px;border:4px solid #4141c6"></div>
<!-- /RIGHT -->
<!-- RIGHT ICONS -->
<svg class="i" style="left:0;top:0;stroke-width:1.25" width="1300" height="637">
 <!-- rail: smiley -->
 <path d="M1274 58.8 a9 9 0 0 0 -3.3 -0.3 a8.8 8.8 0 0 0 -8.7 8.9 a8.8 8.8 0 0 0 8.8 8.7 h10.2 l-1.3 -1.4 a8.8 8.8 0 0 0 1.3 -10.7"/>
 <path d="M1269 70.3 q2.3 1.3 4.5 0" />
 <!-- translate -->
 <path d="M1264 111.5 l3.8 -8.5 l3.8 8.5 M1265.5 108.5 h4.6"/>
 <path d="M1275.5 103.8 h3 a2 2 0 0 1 2 2 v3.2 M1264 114.5 v3.5 a2 2 0 0 0 2 2 h3"/>
 <path d="M1273.5 115.2 h7.3 M1277.2 113.3 v1.9 M1275 115.2 q1.5 5 6 6.2 M1279.5 115.2 q-1.5 5 -6 6.2"/>
 <!-- translate box -->
 <path d="M1272 166 h-5.5 a3 3 0 0 1 -3 -3 v-13.7 a3 3 0 0 1 3 -3 h11.8 a3 3 0 0 1 3 3 v6"/>
 <path d="M1266.5 157 l3.3 -7.5 l3.3 7.5 M1267.8 154.3 h4"/>
 <path d="M1273.5 159.5 h7.8 M1277.4 157.6 v1.9 M1275 159.5 q1.5 5 6.3 6.5 M1279.8 159.5 q-1.5 5 -6.3 6.5"/>
 <!-- summarize -->
 <path d="M1269 211.5 h-2.5 a3 3 0 0 1 -3 -3 v-14 a3 3 0 0 1 3 -3 h11.8 a3 3 0 0 1 3 3 v4.5"/>
 <path d="M1268.2 197.5 h6.5 M1268.2 201.5 h4.5"/>
 <!-- book -->
 <path d="M1281.2 253 v-13.5 a3 3 0 0 0 -3 -3 h-11.7 a3 3 0 0 0 -3 3 v14.5 a3 3 0 0 0 3 3 h14.7 M1268 236.7 v16.3 M1266.5 253 h14.7 M1266.5 253 a2 2 0 0 0 -2 2"/>
 <!-- folder -->
 <path d="M1276 287.5 h-2 l-3.5 -4.3 h-4.2 a3 3 0 0 0 -3 3 v11.8 a3 3 0 0 0 3 3 h12.7 a3 3 0 0 0 3 -3 v-7.2 M1263.3 290.3 h10 l2.5 -2.8"/>
 <!-- search -->
 <path d="M1275.5 328.8 h-9.3 a3 3 0 0 0 -3 3 v11 a3 3 0 0 0 3 3 h4"/>
 <circle cx="1275" cy="340" r="3.6"/><path d="M1277.7 342.7 l3.5 3.3"/>
 <!-- telescope -->
 <path d="M1263.2 381.5 l12.8 -4.8 l2.2 6 l-12.4 4.5 a3 3 0 0 1 -3.3 -1.5 a3 3 0 0 1 0.7 -4.2z"/>
 <path d="M1276 376.7 l5.5 -2.5 a1 1 0 0 1 1.3 0.6 l3 8.2 a1 1 0 0 1 -0.6 1.3 l-5 2 " transform="translate(-2.5,-0.5)"/>
 <circle cx="1271.3" cy="385.5" r="1.8"/><path d="M1270.3 387.3 l-4.8 6.2 M1272.4 387.3 l4.8 6.2"/>

 <!-- chips -->
 <path d="M901.5 470.5 h-2.2 a3 3 0 0 1 -3 -3 v-13.5 a3 3 0 0 1 3 -3 h11.5 a3 3 0 0 1 3 3 v3.8"/>
 <path d="M901.2 456.4 h6.3 M901.2 460.4 h4.3"/>
 <path d="M1018.3 460.6 l4.4 -9.2 l4.4 9.2 M1019.8 457.5 h5.8"/>
 <path d="M1030.3 452.2 h3.3 a2 2 0 0 1 2 2 v3.3 M1018 464 v3.8 a2 2 0 0 0 2 2 h3.5"/>
 <path d="M1027.5 463.5 h7.8 M1031.4 461.6 v1.9 M1029 463.5 q1.5 5 6.3 6.8 M1033.8 463.5 q-1.5 5 -6.3 6.8"/>
 <path d="M1131.3 453.3 h-0.8 a4 4 0 0 0 -4 4 v2 M1125.6 460.4 h4.5 M1131.3 468.5 h-0.8 a4 4 0 0 1 -4 -4 v-4.1"/>
 <rect x="1134.3" y="452" width="8.5" height="3.6" rx="1.8"/><rect x="1134.3" y="459" width="8.5" height="3.6" rx="1.8"/><rect x="1134.3" y="466" width="8.5" height="3.6" rx="1.8"/>
 <!-- atom -->
 <ellipse cx="915.3" cy="584" rx="8.8" ry="4" transform="rotate(45 915.3 584)"/>
 <ellipse cx="915.3" cy="584" rx="8.8" ry="4" transform="rotate(-45 915.3 584)"/>
 <!-- image -->
 <path d="M1099 574.8 h-9 a3 3 0 0 0 -3 3 v12.5 a3 3 0 0 0 3 3 h12.5 a3 3 0 0 0 3 -3 v-8.5"/>
 <path d="M1088.5 592.8 q4 -8.5 16.8 -10.3 M1095.5 593 q-0.3 -4 3 -7.5"/>
 <!-- camera -->
 <path d="M1126.8 578.5 v-2 a2.5 2.5 0 0 1 2.5 -2.5 h2 M1142.5 574 h2 a2.5 2.5 0 0 1 2.5 2.5 v2 M1147 589 v2 a2.5 2.5 0 0 1 -2.5 2.5 h-2 M1131.3 593.5 h-2 a2.5 2.5 0 0 1 -2.5 -2.5 v-2"/>
 <path d="M1131 579 h2.3 l1.5 -1.8 h4 l1.5 1.8 h2.3 a1 1 0 0 1 1 1 v8.5 a1 1 0 0 1 -1 1 h-11.6 a1 1 0 0 1 -1 -1 v-8.5 a1 1 0 0 1 1 -1z"/>
 <circle cx="1136.8" cy="584" r="2.4"/>
 <!-- enter -->
 <rect x="1062.8" y="497.8" width="12.8" height="12.8" rx="2.5" style="stroke:#858585;stroke-width:1.1"/>
 <path d="M1068 501 h2.5 a2.3 2.3 0 0 1 0 4.6 h-4.3 M1067.5 503.8 l-1.8 1.8 l1.8 1.8" style="stroke:#858585;stroke-width:1.2"/>
</svg>
<svg class="a" style="left:0;top:0;position:absolute" width="1300" height="637" fill="#f0f0f0">
 <path d="M1279 56.3 q0.5 3.2 3.5 3.6 q-3 0.5 -3.5 3.6 q-0.5 -3.1 -3.5 -3.6 q3 -0.4 3.5 -3.6z"/>
 <path d="M1275.3 204 q0.6 3.5 4 4 q-3.4 0.5 -4 4 q-0.5 -3.5 -4 -4 q3.5 -0.5 4 -4z"/>
 <path d="M1281.3 201.8 q0.4 2.2 2.4 2.5 q-2 0.3 -2.4 2.5 q-0.3 -2.2 -2.4 -2.5 q2.1 -0.3 2.4 -2.5z"/>
 <path d="M1280 282.8 q0.5 3 3.3 3.4 q-2.8 0.4 -3.3 3.4 q-0.4 -3 -3.3 -3.4 q2.9 -0.4 3.3 -3.4z"/>
 <path d="M1279.5 327.8 q0.5 3 3.3 3.4 q-2.8 0.4 -3.3 3.4 q-0.4 -3 -3.3 -3.4 q2.9 -0.4 3.3 -3.4z"/>
 <path d="M907.8 464.2 q0.6 3.2 3.7 3.7 q-3.1 0.5 -3.7 3.7 q-0.5 -3.2 -3.7 -3.7 q3.2 -0.5 3.7 -3.7z"/>
 <path d="M913.7 461.8 q0.4 2.1 2.4 2.4 q-2 0.3 -2.4 2.4 q-0.3 -2.1 -2.4 -2.4 q2.1 -0.3 2.4 -2.4z"/>
 <path d="M1102.5 573.6 q0.6 3 3.5 3.5 q-2.9 0.5 -3.5 3.5 q-0.5 -3 -3.5 -3.5 q3 -0.5 3.5 -3.5z"/>
 <circle cx="915.3" cy="584" r="1.1"/>
 <circle cx="1268.6" cy="65.8" r="1.1"/><circle cx="1273.8" cy="65.8" r="1.1"/>
 <circle cx="1091.8" cy="580" r="1.1"/>
</svg>
<!-- /RIGHT ICONS -->

</body></html>
